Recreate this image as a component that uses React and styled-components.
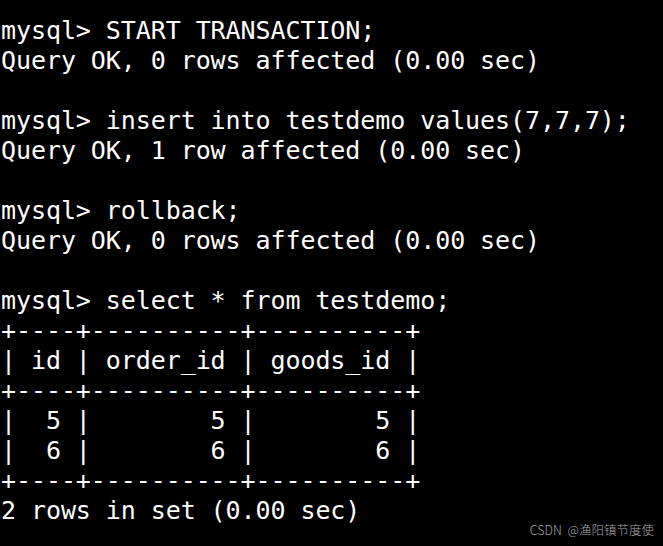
import styled, { createGlobalStyle } from 'styled-components';

const GlobalStyle = createGlobalStyle`
  html, body {
    margin: 0;
    padding: 0;
    background: #000;
  }
`;

const Screen = styled.div`
  position: relative;
  width: 663px;
  height: 546px;
  background: #000;
  overflow: hidden;
`;

const Output = styled.pre`
  margin: 0;
  padding: 16px 0 0 1px;
  font-family: 'DejaVu Sans Mono', 'Liberation Mono', monospace;
  font-size: 25px;
  letter-spacing: -0.08px;
  line-height: 30px;
  color: #fff;
  white-space: pre;
`;

const Line = styled.div`
  height: 30px;
`;

const Watermark = styled.span`
  position: absolute;
  right: 9px;
  bottom: 7px;
  font-family: 'Noto Sans CJK SC', 'Noto Sans', sans-serif;
  font-weight: 300;
  font-size: 12.5px;
  word-spacing: 3px;
  color: #a8a8a8;
`;

const lines = [
  'mysql> START TRANSACTION;',
  'Query OK, 0 rows affected (0.00 sec)',
  '',
  'mysql> insert into testdemo values(7,7,7);',
  'Query OK, 1 row affected (0.00 sec)',
  '',
  'mysql> rollback;',
  'Query OK, 0 rows affected (0.00 sec)',
  '',
  'mysql> select * from testdemo;',
  '+----+----------+----------+',
  '| id | order_id | goods_id |',
  '+----+----------+----------+',
  '|  5 |        5 |        5 |',
  '|  6 |        6 |        6 |',
  '+----+----------+----------+',
  '2 rows in set (0.00 sec)'
];

function App() {
  return (
    <Screen>
      <GlobalStyle />
      <Output>
        {lines.map((text, index) => (
          <Line key={index}>{text}</Line>
        ))}
      </Output>
      <Watermark>CSDN @渔阳镇节度使</Watermark>
    </Screen>
  );
}

export default App;
